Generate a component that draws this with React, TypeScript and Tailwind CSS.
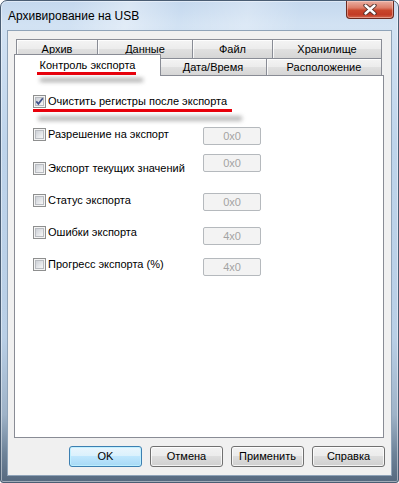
import React from "react";

type Row = {
  label: string;
  value: string;
  row: string;
  cb: string;
  box: string;
};

const rows: Row[] = [
  { label: "Разрешение на экспорт", value: "0x0", row: "mt-[19px]", cb: "mt-[1px]", box: "mt-0" },
  { label: "Экспорт текущих значений", value: "0x0", row: "mt-[9px]", cb: "mt-[8px]", box: "mt-0" },
  { label: "Статус экспорта", value: "0x0", row: "mt-[18px]", cb: "mt-[1px]", box: "mt-0" },
  { label: "Ошибки экспорта", value: "4x0", row: "mt-[15px]", cb: "mt-0", box: "mt-[1px]" },
  { label: "Прогресс экспорта (%)", value: "4x0", row: "mt-[13px]", cb: "mt-0", box: "mt-0" },
];

const backTabs = [
  { label: "Архив", w: "w-[81px]" },
  { label: "Данные", w: "w-[95px]" },
  { label: "Файл", w: "w-[80px]" },
  { label: "Хранилище", w: "w-[110px] border-r" },
];

function CheckBox({ checked }: { checked?: boolean }) {
  return (
    <span className="w-[13px] h-[13px] shrink-0 border border-[#8e8f8f] bg-[#f4f4f4] p-[1px] flex">
      <span className="relative flex-1 border border-[#b9bcc1] bg-[linear-gradient(135deg,#cdd1d7_0%,#e4e6e9_55%,#f7f7f7_100%)]">
        {checked && (
          <svg className="absolute left-[-1px] top-[-1px]" width="9" height="9" viewBox="0 0 9 9">
            <path d="M1.3 4.4 L3.4 6.8 L7.8 1.2" fill="none" stroke="#3f5189" strokeWidth="1.7" />
          </svg>
        )}
      </span>
    </span>
  );
}

function ValueBox({ value, className }: { value: string; className: string }) {
  return (
    <div
      className={
        "w-[58px] h-[18px] shrink-0 rounded-[2px] border border-[#b5b9bd] bg-[#f3f3f3] flex items-center justify-center text-[#a3a3a3] " +
        className
      }
    >
      {value}
    </div>
  );
}

function Btn({ children, primary }: { children: React.ReactNode; primary?: boolean }) {
  return (
    <div
      className={
        primary
          ? "w-[73px] h-[21px] rounded-[3px] border border-[#3c7fb1] bg-[linear-gradient(to_bottom,#eaf6fd_0%,#d9f0fc_50%,#bee6fd_50%,#a7d9f5_100%)] shadow-[inset_0_0_0_1px_rgba(190,240,255,0.9)] flex items-center justify-center text-black"
          : "w-[73px] h-[21px] rounded-[3px] border border-[#707070] bg-[linear-gradient(to_bottom,#f2f2f2_0%,#ebebeb_50%,#dddddd_50%,#cfcfcf_100%)] shadow-[inset_0_0_0_1px_rgba(255,255,255,0.75)] flex items-center justify-center text-black"
      }
    >
      {children}
    </div>
  );
}

export default function App() {
  return (
    <div className="w-[399px] h-[483px] bg-white font-['Liberation_Sans',Arial,sans-serif] text-[11px] text-black">
      <div className="relative w-[399px] h-[483px] rounded-t-[7px] rounded-b-[3px] border border-[#4a5d73] bg-[linear-gradient(to_bottom,#c4d8ee_0%,#d2e2f3_5%,#bed4eb_30%,#b9cfe6_70%,#9fb3c8_86%,#6e8399_94%,#56697f_100%)] shadow-[inset_0_0_0_1px_rgba(255,255,255,0.45)] flex flex-col">
        {/* title bar */}
        <div className="h-[29px] pl-[7px] flex items-center bg-[linear-gradient(100deg,rgba(255,255,255,0)_0%,rgba(255,255,255,0)_18%,rgba(255,255,255,0.35)_32%,rgba(255,255,255,0)_45%,rgba(255,255,255,0.25)_62%,rgba(255,255,255,0)_75%)] rounded-t-[6px]">
          <span className="font-['Liberation_Sans',Arial,sans-serif] text-[12px] text-black">Архивирование на USB</span>
        </div>
        <div className="absolute top-0 right-[4px] w-[48px] h-[18px] rounded-b-[4px] border border-t-0 border-[#6b2a20] bg-[linear-gradient(to_bottom,#eab0a3_0%,#dc7d68_40%,#c9462c_55%,#c23b25_80%,#d2654c_100%)] shadow-[inset_0_0_0_1px_rgba(255,220,210,0.45)] flex items-center justify-center">
          <svg width="14" height="11" viewBox="0 0 14 11">
            <path d="M2.5 1.5 L11.5 9.5 M11.5 1.5 L2.5 9.5" stroke="#4a2a25" strokeWidth="4.2" strokeLinecap="round" />
            <path d="M2.5 1.5 L11.5 9.5 M11.5 1.5 L2.5 9.5" stroke="#ffffff" strokeWidth="2.4" strokeLinecap="round" />
          </svg>
        </div>

        {/* client */}
        <div className="mx-[6px] h-[446px] border border-[#8fa3b8] bg-[#f0f0f0] pt-[8px] flex flex-col">
          <div className="ml-[8px] h-[19px] flex">
            {backTabs.map((t) => (
              <div
                key={t.label}
                className={
                  "h-[19px] border-l border-t border-[#898c95] bg-[linear-gradient(to_bottom,#f4f4f4_0%,#ececec_48%,#e0e0e0_52%,#d6d6d6_100%)] shadow-[inset_1px_1px_0_rgba(255,255,255,0.8)] flex items-center justify-center " +
                  t.w
                }
              >
                {t.label}
              </div>
            ))}
          </div>
          <div className="ml-[6px] h-[17px] flex items-end">
            <div className="relative z-10 w-[147px] h-[22px] -mb-[1px] border border-b-0 border-[#898c95] bg-white flex items-center justify-center pb-[1px]">
              Контроль экспорта
              <div className="absolute left-[22px] top-[17px] w-[99px] h-[3px] bg-[#e8000b]" />
              <div className="absolute left-[25px] top-[23px] w-[103px] h-[4px] bg-[#8a8a8a] blur-[2px] opacity-70" />
            </div>
            <div className="-ml-[2px] w-[107px] h-[17px] border-l border-t border-[#898c95] bg-[linear-gradient(to_bottom,#f4f4f4_0%,#ececec_48%,#e0e0e0_52%,#d6d6d6_100%)] shadow-[inset_1px_1px_0_rgba(255,255,255,0.8)] flex items-center justify-center">
              Дата/Время
            </div>
            <div className="w-[116px] h-[17px] border-l border-t border-r border-[#898c95] bg-[linear-gradient(to_bottom,#f4f4f4_0%,#ececec_48%,#e0e0e0_52%,#d6d6d6_100%)] shadow-[inset_1px_1px_0_rgba(255,255,255,0.8)] flex items-center justify-center">
              Расположение
            </div>
          </div>

          {/* panel */}
          <div className="ml-[6px] w-[370px] h-[363px] border border-[#898c95] bg-white pt-[19px] pl-[18px] flex flex-col">
            <div className="relative h-[13px] flex items-center gap-[2px]">
              <CheckBox checked />
              <span>Очистить регистры после экспорта</span>
              <div className="absolute left-0 top-[14px] w-[199px] h-[3px] bg-[#e8000b]" />
              <div className="absolute left-[5px] top-[21px] w-[204px] h-[5px] bg-[#8a8a8a] blur-[2px] opacity-60" />
            </div>
            {rows.map((r) => (
              <div key={r.label} className={"flex items-start " + r.row}>
                <div className={"w-[170px] h-[13px] shrink-0 flex items-center gap-[2px] " + r.cb}>
                  <CheckBox />
                  <span className="whitespace-nowrap">{r.label}</span>
                </div>
                <ValueBox value={r.value} className={r.box} />
              </div>
            ))}
          </div>

          <div className="mt-[8px] pr-[6px] flex justify-end gap-[8px]">
            <Btn primary>OK</Btn>
            <Btn>Отмена</Btn>
            <Btn>Применить</Btn>
            <Btn>Справка</Btn>
          </div>
        </div>
      </div>
    </div>
  );
}
